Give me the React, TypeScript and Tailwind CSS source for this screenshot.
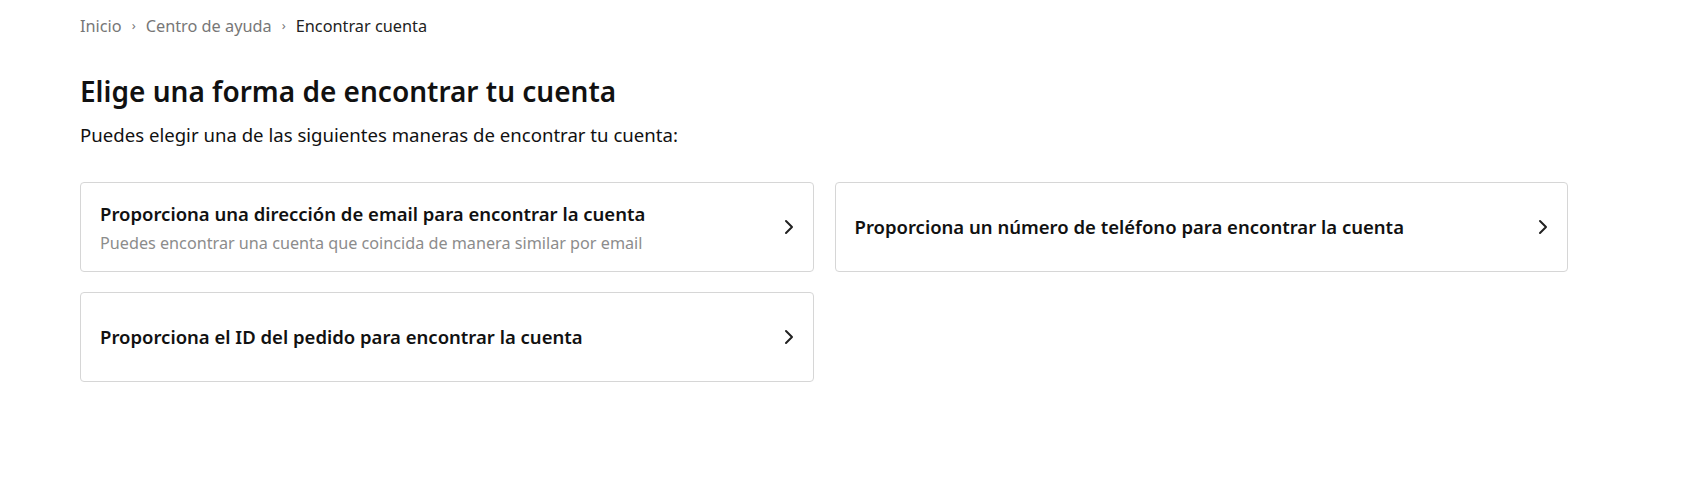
import { ChevronRight } from "lucide-react";

const options = [
  {
    title: "Proporciona una dirección de email para encontrar la cuenta",
    desc: "Puedes encontrar una cuenta que coincida de manera similar por email",
  },
  {
    title: "Proporciona un número de teléfono para encontrar la cuenta",
  },
  {
    title: "Proporciona el ID del pedido para encontrar la cuenta",
  },
];

function OptionCard({ title, desc }: { title: string; desc?: string }) {
  return (
    <div className="flex h-[90px] cursor-pointer items-center justify-between rounded-[4px] border border-[#d6d6d6] bg-white pl-[19px] pr-[12px]">
      <div className="flex flex-col">
        <span className="text-[18.5px] leading-[26px] font-semibold text-[#111]">
          {title}
        </span>
        {desc && (
          <span className="mt-[5px] text-[16.2px] leading-[22px] text-[#8c8c8c]">
            {desc}
          </span>
        )}
      </div>
      <ChevronRight className="h-6 w-6 text-[#222]" strokeWidth={2} />
    </div>
  );
}

export default function App() {
  return (
    <div
      className="min-h-[500px] bg-white pl-[80px] text-[#111]"
      style={{ fontFamily: '"Noto Sans", "Open Sans", sans-serif' }}
    >
      <div className="w-[1488px]">
        <nav className="flex h-[52px] items-center gap-[10px] text-[16.3px] text-[#777]">
          <span>Inicio</span>
          <span className="text-[13px]">›</span>
          <span>Centro de ayuda</span>
          <span className="text-[13px]">›</span>
          <span className="text-[#222]">Encontrar cuenta</span>
        </nav>

        <h1 className="mt-[21px] text-[28px] leading-[36px] font-semibold">
          Elige una forma de encontrar tu cuenta
        </h1>
        <p className="mt-[13px] text-[18.6px] leading-[26px]">
          Puedes elegir una de las siguientes maneras de encontrar tu cuenta:
        </p>

        <div className="mt-[34px] grid grid-cols-2 gap-x-[21px] gap-y-[20px]">
          {options.map((o) => (
            <OptionCard key={o.title} title={o.title} desc={o.desc} />
          ))}
        </div>
      </div>
    </div>
  );
}
